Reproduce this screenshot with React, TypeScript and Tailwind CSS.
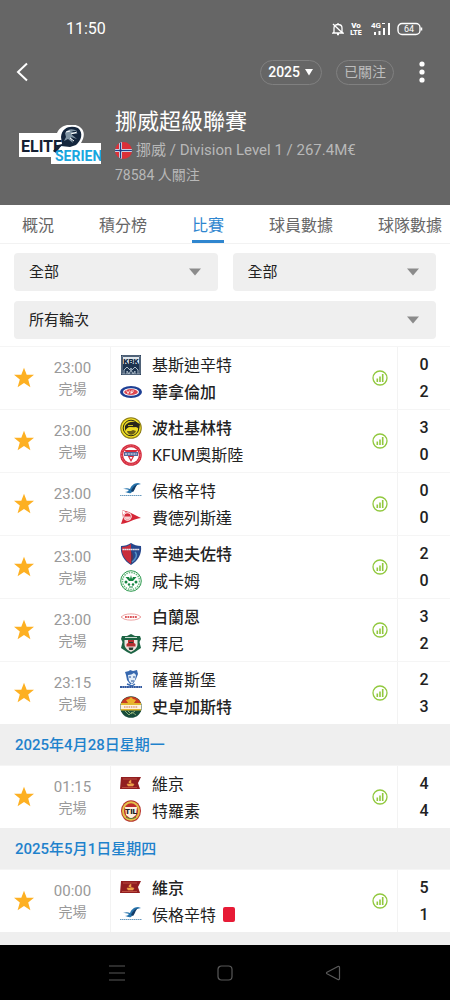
import React, { useState } from 'react';

type CrestName =
  | 'kristiansund' | 'valerenga' | 'bodo' | 'kfum' | 'haugesund' | 'fredrikstad'
  | 'sandefjord' | 'hamkam' | 'brann' | 'bryne' | 'sarpsborg' | 'stromsgodset'
  | 'viking' | 'tromso';

type Team = { name: string; crest: CrestName; score: number; winner?: boolean; redCard?: boolean };
type Match = { time: string; home: Team; away: Team };
type Round = { date?: string; matches: Match[] };

const rounds: Round[] = [
  {
    matches: [
      { time: '23:00', home: { name: '基斯迪辛特', crest: 'kristiansund', score: 0 }, away: { name: '華拿倫加', crest: 'valerenga', score: 2, winner: true } },
      { time: '23:00', home: { name: '波杜基林特', crest: 'bodo', score: 3, winner: true }, away: { name: 'KFUM奧斯陸', crest: 'kfum', score: 0 } },
      { time: '23:00', home: { name: '侯格辛特', crest: 'haugesund', score: 0 }, away: { name: '費德列斯達', crest: 'fredrikstad', score: 0 } },
      { time: '23:00', home: { name: '辛迪夫佐特', crest: 'sandefjord', score: 2, winner: true }, away: { name: '咸卡姆', crest: 'hamkam', score: 0 } },
      { time: '23:00', home: { name: '白蘭恩', crest: 'brann', score: 3, winner: true }, away: { name: '拜尼', crest: 'bryne', score: 2 } },
      { time: '23:15', home: { name: '薩普斯堡', crest: 'sarpsborg', score: 2 }, away: { name: '史卓加斯特', crest: 'stromsgodset', score: 3, winner: true } },
    ],
  },
  {
    date: '2025年4月28日星期一',
    matches: [
      { time: '01:15', home: { name: '維京', crest: 'viking', score: 4 }, away: { name: '特羅素', crest: 'tromso', score: 4 } },
    ],
  },
  {
    date: '2025年5月1日星期四',
    matches: [
      { time: '00:00', home: { name: '維京', crest: 'viking', score: 5, winner: true }, away: { name: '侯格辛特', crest: 'haugesund', score: 1, redCard: true } },
    ],
  },
];

const crests: Record<CrestName, React.ReactNode> = {
  kristiansund: (
    <>
      <rect x="1" y="1" width="20" height="20" fill="#1d3450" />
      <rect x="2" y="2" width="18" height="18" fill="none" stroke="#e6ebf0" strokeWidth=".5" />
      <rect x="3" y="3" width="16" height="7" fill="#dfe6ec" />
      <text x="11" y="9.5" textAnchor="middle" fontSize="8" fontWeight="900" fill="#142a44">KBK</text>
      <path d="M4 20v-4l3-3 3 3 1-2 1 2 3-3 3 3v4M7 20v-3l2 3 2-4 2 4 2-3v3" fill="none" stroke="#b9c7d4" strokeWidth=".9" />
    </>
  ),
  valerenga: (
    <>
      <ellipse cx="11" cy="11" rx="11" ry="6" fill="#1d3f94" />
      <ellipse cx="11" cy="11" rx="8" ry="3.8" fill="#fff" />
      <ellipse cx="11" cy="11" rx="6.8" ry="3" fill="#dc4650" />
      <path d="M6.5 9.500l1.500 3 1.500-3m1.500 3.500v-3h3m-3 1.500h2" fill="none" stroke="#fff" strokeWidth=".8" />
    </>
  ),
  bodo: (
    <>
      <circle cx="11" cy="11" r="10.8" fill="#8a7a16" />
      <circle cx="11" cy="11" r="9.8" fill="#eedc24" />
      <circle cx="11" cy="11" r="7.8" fill="none" stroke="#2b2a1a" strokeWidth="1" />
      <path d="M5 9c2-4 7-5 11-4l4 2-1 5c-2-2-3-2-5-1l-4-1c-2 0-4 2-5 4z" fill="#29271b" />
      <path d="M8 8.500h5m-3 2h6" stroke="#eedc24" strokeWidth=".8" fill="none" />
      <path d="M7 14c1 5 7 5 9 0l-3-1-2 1z" fill="#6b5d18" />
    </>
  ),
  kfum: (
    <>
      <circle cx="11" cy="11" r="10.8" fill="#d52b3c" />
      <circle cx="11" cy="11" r="7.800" fill="#fff" />
      <circle cx="11" cy="11" r="9.300" fill="none" stroke="#ef8f98" strokeWidth=".6" strokeDasharray="2 1" />
      <path d="M4.500 6h13L11 18z" fill="#d52b3c" />
      <path d="M4 8h14v4H4z" fill="#55699b" />
      <path d="M5 10h12" stroke="#c3ccdf" strokeWidth="1.500" strokeDasharray="2 .8" />
      <path d="M9.500 13h3L11 15.500z" fill="#fff" />
    </>
  ),
  haugesund: (
    <>
      <path d="M3 9c3-1 5-1 7 0 1-3 4-6 8-6l3 1-4 1c-3 1-3 6-6 8-2 1-4-1-6-1 2 0 3-1 4-2-2-1-4-1-6-1z" fill="#2673ac" />
      <path d="M11 11c1-3 4-6 7-7-3 3-3 6-5 8z" fill="#123b66" />
      <path d="M0 15.500h22" stroke="#6b9bbf" strokeWidth="1" strokeDasharray="1.500 .5" />
    </>
  ),
  fredrikstad: (
    <>
      <path d="M2 3l7 2 12 6c-8 1-12 5-20 6l2-6z" fill="#d52636" />
      <path d="M2 3l4 2-3 3z" fill="#fff" />
      <circle cx="7.500" cy="9.500" r="4.200" fill="#fff" />
      <circle cx="7.500" cy="9.500" r="3.200" fill="#d52636" />
      <path d="M4.500 9.500h6v1c-1 3-5 3-6 0z" fill="#f7cfd2" />
    </>
  ),
  sandefjord: (
    <>
      <path d="M1 3c4 0 7-1 10-3 3 2 6 3 10 3 1 8-3 15-10 19C4 18 0 11 1 3z" fill="#26478c" />
      <path d="M2 4c4 0 6-1 9-3v20C5 17 1 11 2 4z" fill="#c92d3c" />
      <path d="M11 8v13c3-5 2-10 0-13z" fill="#5a344f" />
      <path d="M2.500 6.500h17" stroke="#e6dfe8" strokeWidth="1.500" strokeDasharray="1.800 .3" />
      <path d="M15 9c3 3 1 7-3 10" fill="none" stroke="#5490c5" strokeWidth="1.500" />
    </>
  ),
  hamkam: (
    <>
      <circle cx="11" cy="11" r="10.300" fill="#fff" stroke="#2f9b50" strokeWidth="1" />
      <circle cx="11" cy="11" r="8.500" fill="none" stroke="#68b97e" strokeWidth="1.500" strokeDasharray="1.500 1" />
      <path d="M5.500 7h3.500l1 2 1-4 1 4 1-2h3.500l-3.500 4h-4z" fill="#168541" />
      <circle cx="6" cy="12" r="1.500" fill="#168541" />
      <circle cx="16" cy="12" r="1.500" fill="#168541" />
      <circle cx="9" cy="14.500" r="1.200" fill="#168541" />
      <circle cx="13" cy="14.500" r="1.200" fill="#168541" />
      <path d="M9 17h4" stroke="#168541" />
    </>
  ),
  brann: (
    <>
      <path d="M1 11l3-2c4-1.500 10-1.500 14 0l3 2-3 2c-4 1.500-10 1.500-14 0z" fill="#fff" stroke="#e88b8b" strokeWidth=".8" />
      <path d="M5 11h12" stroke="#dd565a" strokeWidth="2.200" strokeDasharray="1.800 .7" />
    </>
  ),
  bryne: (
    <>
      <path d="M2 3h5l4-2 4 2h5l1 3-1.500 3L21 15l-6 4-4 2-4-2-6-4 1.500-6L1 6z" fill="#1c6444" />
      <path d="M4.500 7h13v4c0 4-3 6-6.500 8-3.500-2-6.500-4-6.500-8z" fill="#eee5df" />
      <path d="M5 4.500h12" stroke="#c9d9ce" strokeWidth="1" />
      <path d="M8 7h6v3l1.500 1v2.500h-9V11L8 10z" fill="#b52f31" />
      <path d="M8.500 14.500h5l-.8 2.500H9.300z" fill="#26382e" />
      <path d="M9 9.500h4" stroke="#26382e" />
    </>
  ),
  sarpsborg: (
    <>
      <path d="M5 3l4-1 1-1 3 1 4-1 1 4-2 5-3 5h-3l-3-4-1-5z" fill="#3768af" />
      <path d="M8 6c3 0 4-1 6-2l2 2-1 5-3 4-3-3z" fill="#e2edf8" />
      <path d="M9 8h2m2 0h2m-4 4h3" stroke="#234e96" strokeWidth="1" />
      <path d="M7 15l5 2 3-2" fill="none" stroke="#3768af" strokeWidth="1.500" />
      <path d="M0 18h22" stroke="#3159a0" strokeWidth="1.800" strokeDasharray="2 .3" />
    </>
  ),
  stromsgodset: (
    <>
      <circle cx="11" cy="11" r="10.800" fill="#174c3b" />
      <path d="M.8 8a10.800 10.800 0 0120.400 0z" fill="#c63a22" />
      <path d="M11 1l2 2 3 1-2 3H8L6 4l3-1z" fill="#edb32b" />
      <path d="M1 7h20v2H1zM1 13h20v1.500H1z" fill="#e1b72f" />
      <path d="M.6 9h20.800v4H.6z" fill="#fff2df" />
      <path d="M4 11h14" stroke="#d99b80" strokeWidth="1.500" strokeDasharray="1.500 .8" />
      <path d="M5 15l4 4 3-3 4 3M8 15l3 3 4-3" stroke="#89ab74" fill="none" />
    </>
  ),
  viking: (
    <>
      <path d="M1 4h20l-3 6 2 6H0z" fill="#911e20" />
      <path d="M3 6h14M2 14.500h15" stroke="#bb4b3e" strokeWidth="1" />
      <path d="M7 11h7l-1 2H8zM9 10V8.500L11 7v4h2" fill="#eda34b" stroke="#eda34b" strokeWidth=".5" />
    </>
  ),
  tromso: (
    <>
      <ellipse cx="11" cy="11" rx="10" ry="10.800" fill="#b6342c" />
      <ellipse cx="11" cy="11" rx="9" ry="9.800" fill="#e3c34b" />
      <ellipse cx="11" cy="11" rx="7" ry="7.800" fill="#bd2d2c" />
      <path d="M5 7h12l-1 8-5 4-5-4z" fill="#fff1df" />
      <text x="11" y="14" textAnchor="middle" fontSize="8" fontWeight="900" fill="#202020">TIL</text>
      <path d="M6 17c3 2 7 2 10 0" fill="none" stroke="#507a36" />
    </>
  ),
};

function Crest({ name }: { name: CrestName }) {
  return (
    <svg viewBox="0 0 22 22" className="size-[22px] shrink-0" aria-hidden="true">
      {crests[name]}
    </svg>
  );
}

function StatusBar() {
  return (
    <div className="flex h-[58px] items-center justify-between pr-[27px] pl-[66px]">
      <span className="text-base">11:50</span>
      <div className="flex items-center" aria-hidden="true">
        <svg viewBox="0 0 12 14" className="mr-[7px] h-3.5 w-3" fill="none" stroke="currentColor" strokeWidth="1.300">
          <path d="M2 10V6c0-2 1.500-3.500 4-3.500S10 4 10 6v4l1 1H1zM5 12.500h2M6 1v1.500M1 2l10 9.500" />
        </svg>
        <svg viewBox="0 0 12 14" className="mr-2 h-3.5 w-3 overflow-visible" fill="currentColor">
          <text x="5" y="6" textAnchor="middle" fontSize="8" fontWeight="900">Vo</text>
          <text x="5" y="13" textAnchor="middle" fontSize="7" fontWeight="900">LTE</text>
        </svg>
        <svg viewBox="0 0 20 14" className="mr-[6px] h-3.5 w-5 overflow-visible" fill="currentColor">
          <text x="0" y="6" fontSize="8" fontWeight="700">4G</text>
          <path d="M3 10h2v3H3zM7.500 9h2v4h-2zM12 6h2v7h-2zM17 1h2v12h-2zM11 1h3v1h-3z" />
        </svg>
        <svg viewBox="0 0 26 14" className="h-3.5 w-[26px]" fill="none" stroke="currentColor">
          <rect x="1" y="1.500" width="22" height="11" rx="4" strokeWidth="1.400" />
          <path d="M24.500 5.500v3" strokeWidth="1.500" />
          <text x="12" y="10" textAnchor="middle" fontSize="9" fill="currentColor" stroke="none">64</text>
        </svg>
      </div>
    </div>
  );
}

function LeagueLogo() {
  return (
    <svg viewBox="0 0 82 40" className="h-10 w-[82px] shrink-0" role="img" aria-label="Eliteserien">
      <path d="M0 8h38c4-10 20-11 25-4 3 4 2 9-1 14h20v21H32v-7H0z" fill="#fff" />
      <path d="M42 12C43 2 52 0 59 3c6 5 3 13-2 17l-6 2-9-1-5 7-3-2 5-6 4-1z" fill="#14263d" />
      <path d="M46 8c4-5 8-4 12-2h-6l7 3-7 0 6 5-6-2 2 6-5-4-4 2 2-4z" fill="#8296a5" />
      <path d="M47 7l4-1m1 3l6-2m-7 6l4 3" stroke="#fff" strokeWidth="1" />
      <text x="2" y="27" fontSize="16" fontWeight="700" fill="#142033">ELITE</text>
      <text x="36" y="36" fontSize="14" fontWeight="700" fill="#19a7df">SERIEN</text>
    </svg>
  );
}

function Header() {
  return (
    <header className="h-[205px] bg-[#666666] text-white">
      <StatusBar />
      <div className="flex h-7 items-center pr-5 pl-4">
        <button type="button" aria-label="返回" className="flex h-7 w-4 items-center">
          <svg viewBox="0 0 12 20" className="h-5 w-3" fill="none" stroke="currentColor" strokeWidth="2">
            <path d="M11 1.500L2 10l9 8.500" />
          </svg>
        </button>
        <button type="button" className="ml-auto flex h-[25px] items-center gap-1 rounded-full border border-[#808080] px-[7px] text-sm font-medium">
          2025
          <svg viewBox="0 0 10 8" className="h-2 w-2.5" fill="currentColor"><path d="M1 1h8L5 7.500z" /></svg>
        </button>
        <button type="button" className="ml-[14px] h-[25px] rounded-full border border-[#808080] px-[7px] text-sm leading-[23px] text-[#bdbdbd]">已關注</button>
        <button type="button" aria-label="更多" className="ml-5 flex h-7 w-4 items-center justify-center">
          <svg viewBox="0 0 6 22" className="h-[22px] w-1.5" fill="currentColor">
            <circle cx="3" cy="3" r="2.600" /><circle cx="3" cy="11" r="2.600" /><circle cx="3" cy="19" r="2.600" />
          </svg>
        </button>
      </div>
      <div className="flex items-start gap-[14px] pt-5 pl-[19px]">
        <div className="pt-[19px]"><LeagueLogo /></div>
        <div className="whitespace-nowrap text-[#b8b8b8]">
          <h1 className="text-[22px] leading-8 text-white">挪威超級聯賽</h1>
          <p className="flex items-center gap-1 text-[15px] leading-6">
            <svg viewBox="0 0 17 17" className="size-[17px]" aria-hidden="true">
              <clipPath id="flag"><circle cx="8.500" cy="8.500" r="8.500" /></clipPath>
              <g clipPath="url(#flag)">
                <path d="M0 0h17v17H0z" fill="#dc3038" />
                <path d="M5.500 0v17M0 8.500h17" stroke="#fff" strokeWidth="3" />
                <path d="M5.500 0v17M0 8.500h17" stroke="#203f86" strokeWidth="1.600" />
              </g>
            </svg>
            挪威 / Division Level 1 / 267.4M€
          </p>
          <p className="text-sm leading-[26px]">78584 人關注</p>
        </div>
      </div>
    </header>
  );
}

function Filter({ label, options, className }: { label: string; options: string[]; className?: string }) {
  return (
    <div className={'relative ' + (className ?? '')}>
      <select aria-label={label} className="h-[38px] w-full appearance-none rounded-sm bg-[#efefef] px-[15px] text-[15px] leading-[38px] text-[#222222]">
        {options.map((o) => <option key={o}>{o}</option>)}
      </select>
      <svg viewBox="0 0 12 8" className="pointer-events-none absolute top-[15px] right-[17px] h-2 w-3" fill="#8b8b8b" aria-hidden="true">
        <path d="M0 .5h12L6 7.500z" />
      </svg>
    </div>
  );
}

function TeamLine({ team }: { team: Team }) {
  return (
    <div className="flex h-[27px] items-center">
      <Crest name={team.crest} />
      <span className={'ml-[10px] pt-0.5 whitespace-nowrap text-[#222222] ' + (team.winner ? 'font-medium' : 'font-normal')}>{team.name}</span>
      {team.redCard && <span role="img" aria-label="紅牌" className="ml-[7px] h-[15px] w-3 rounded-[2px] bg-[#e71b36]" />}
    </div>
  );
}

function MatchRow({ match }: { match: Match }) {
  const [starred, setStarred] = useState(true);
  return (
    <li className="flex h-[63px] border-t border-[#f5f5f5] bg-white">
      <button type="button" aria-label="收藏" aria-pressed={starred} onClick={() => setStarred(!starred)} className="flex w-12 items-center justify-center">
        <svg viewBox="0 0 22 22" className="size-[22px]" fill={starred ? '#fdb022' : '#cccccc'}>
          <path d="M11 .8l2.700 7H21l-5.800 4.700 2.200 7.700L11 15.900l-6.400 4.300 2.200-7.700L1 7.800h7.300z" />
        </svg>
      </button>
      <div className="flex w-[49px] flex-col items-center justify-center text-[#999999]">
        <time className="text-[15px] leading-[21px]">{match.time}</time>
        <span className="text-sm leading-5">完場</span>
      </div>
      <div className="ml-[13px] flex min-w-0 flex-1 flex-col justify-center border-l border-[#f3f3f3] pl-[9px] text-base">
        <TeamLine team={match.home} />
        <TeamLine team={match.away} />
      </div>
      <a href="#stats" aria-label="統計" className="flex w-[34px] items-center justify-center">
        <svg viewBox="0 0 16 16" className="size-4" fill="#91c83e">
          <circle cx="8" cy="8" r="7" fill="none" stroke="#91c83e" strokeWidth="1.300" />
          <path d="M4.500 8.500h1.600V12H4.500zM7.200 6.500h1.600V12H7.200zM9.900 4h1.600v8H9.900z" />
        </svg>
      </a>
      <div className="flex w-[53px] flex-col items-center justify-center border-l border-[#f3f3f3] text-base font-medium text-[#222222]">
        <span className="leading-[27px]">{match.home.score}</span>
        <span className="leading-[27px]">{match.away.score}</span>
      </div>
    </li>
  );
}

const tabs = ['概況', '積分榜', '比賽', '球員數據', '球隊數據'];

export default function App() {
  const [active, setActive] = useState('比賽');
  return (
    <div className="flex min-h-screen flex-col bg-[#efefef] font-['Roboto','Noto_Sans_CJK_TC',sans-serif]">
      <Header />
      <nav className="flex h-[39px] gap-[45px] border-b border-[#f2f2f2] bg-white pl-[22px]">
        {tabs.map((tab) => (
          <button
            key={tab}
            type="button"
            onClick={() => setActive(tab)}
            className={'shrink-0 border-b-3 pt-1.5 text-base ' + (tab === active ? 'border-[#2f86cf] text-[#2f86cf]' : 'border-transparent text-[#666666]')}
          >
            {tab}
          </button>
        ))}
      </nav>
      <section className="grid grid-cols-2 gap-x-[15px] gap-y-[10px] bg-white px-[14px] pt-[9px] pb-[7px]">
        <Filter label="球隊" options={['全部']} />
        <Filter label="主客" options={['全部']} />
        <Filter label="輪次" options={['所有輪次']} className="col-span-2" />
      </section>
      <main className="flex-1">
        {rounds.map((round, i) => (
          <section key={i}>
            {round.date && <h2 className="h-[41px] px-[15px] text-[15px] leading-[42px] font-medium text-[#1f82cc]">{round.date}</h2>}
            <ul>
              {round.matches.map((m, j) => <MatchRow key={j} match={m} />)}
            </ul>
          </section>
        ))}
      </main>
      <footer className="flex h-[55px] items-center justify-center gap-[92px] bg-black text-[#595959]">
        <button type="button" aria-label="最近使用">
          <svg viewBox="0 0 16 16" className="size-4" fill="none" stroke="currentColor" strokeWidth="1.200"><path d="M0 1h16M0 8h16M0 15h16" /></svg>
        </button>
        <button type="button" aria-label="主畫面">
          <svg viewBox="0 0 16 16" className="size-4" fill="none" stroke="currentColor" strokeWidth="1.200"><rect x="1" y="1" width="14" height="14" rx="3.500" /></svg>
        </button>
        <button type="button" aria-label="上一頁">
          <svg viewBox="0 0 16 16" className="size-4" fill="none" stroke="currentColor" strokeWidth="1.200"><path d="M14.500 2.500v11c0 1-.8 1.400-1.600 1L2 8.700c-.7-.4-.7-1 0-1.400l10.900-5.800c.8-.4 1.600 0 1.600 1z" /></svg>
        </button>
      </footer>
    </div>
  );
}
